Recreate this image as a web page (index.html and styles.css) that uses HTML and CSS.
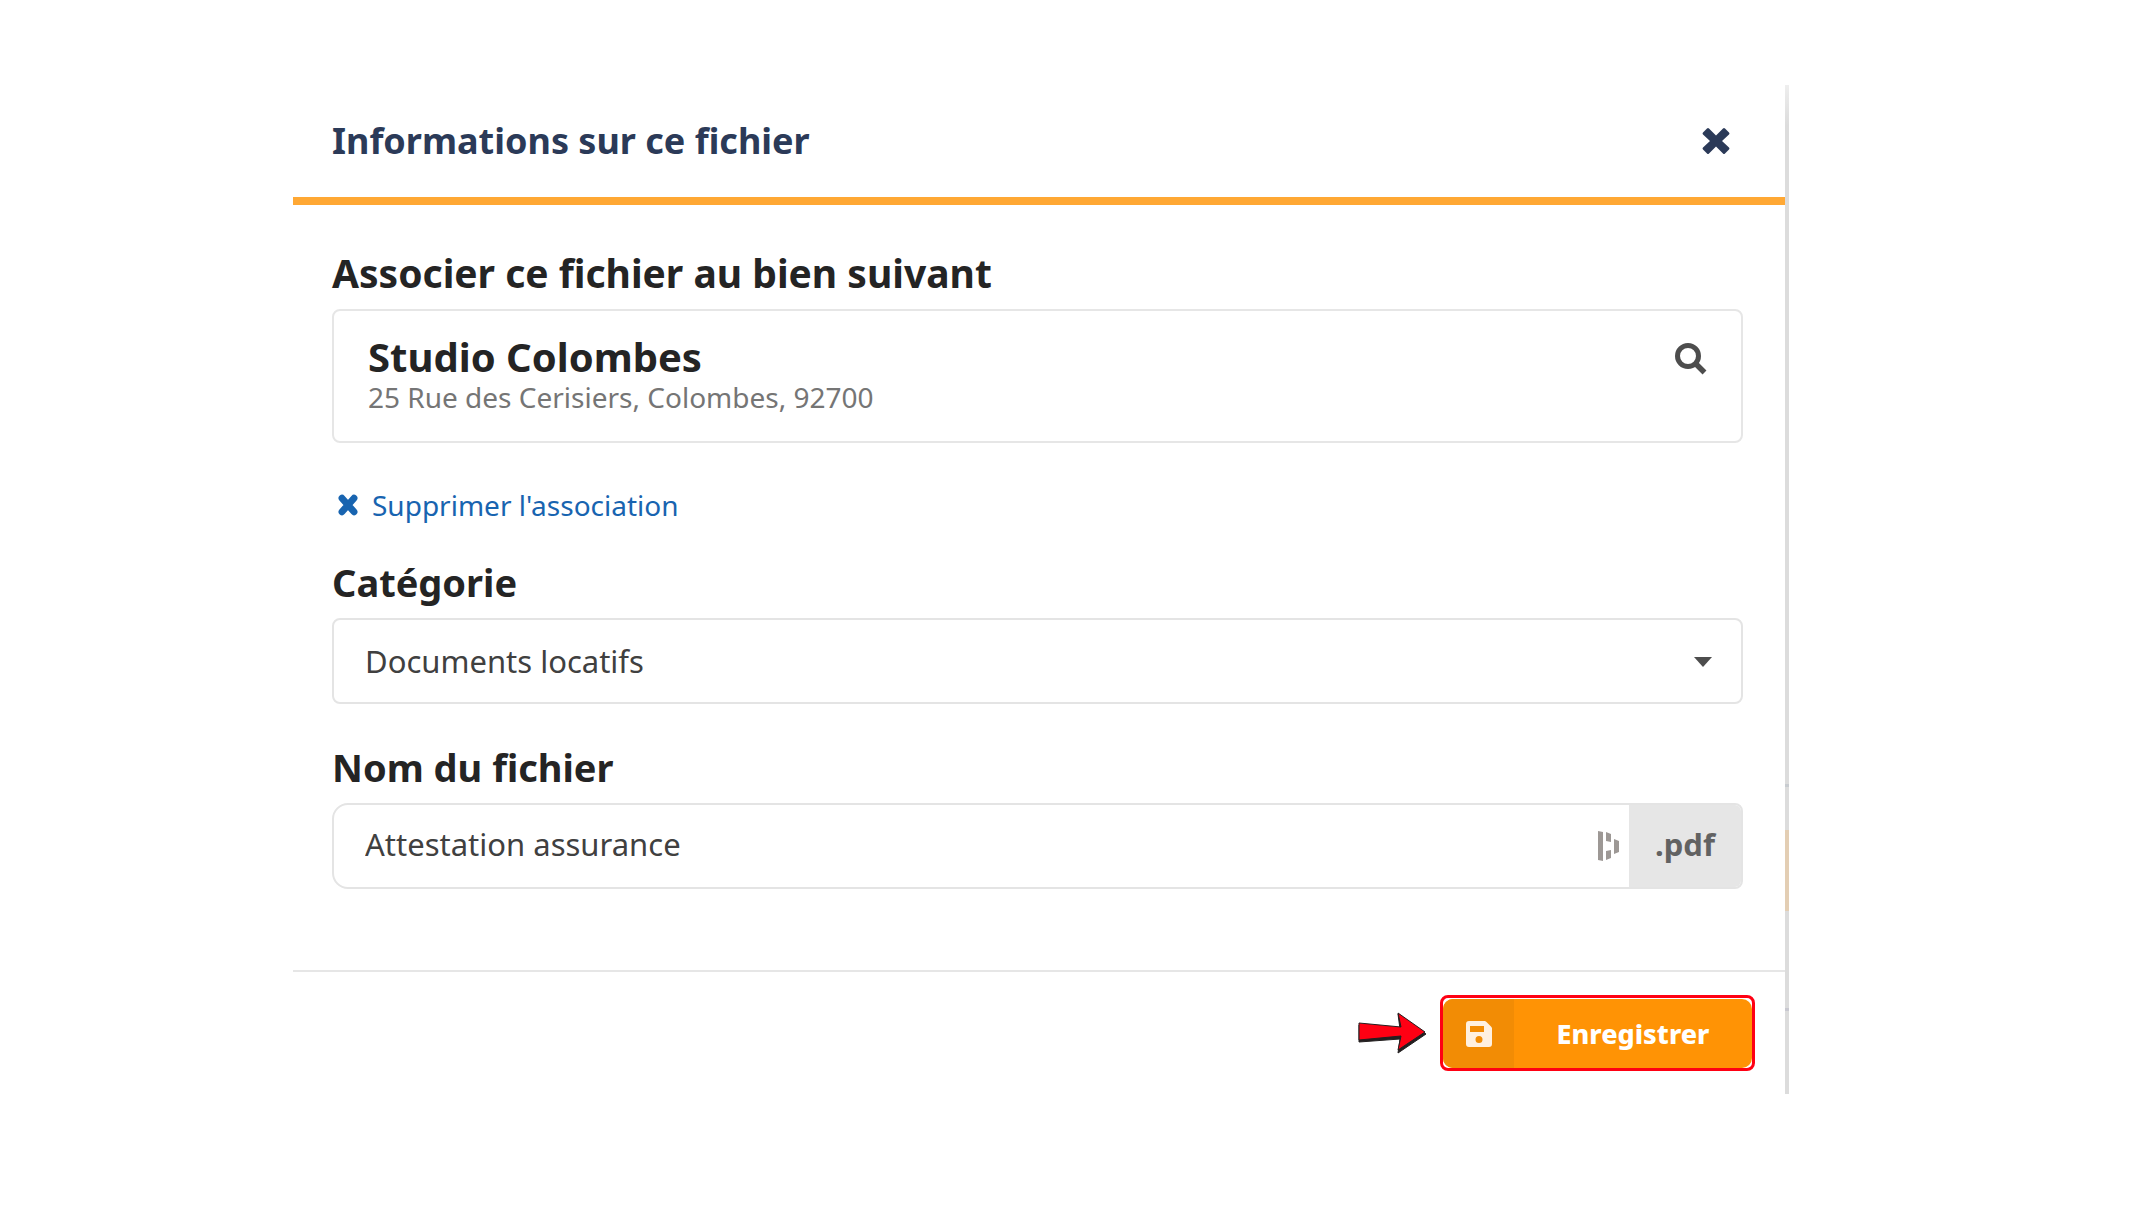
FILE: index.html
```html
<!DOCTYPE html>
<html lang="fr">
<head>
    <meta charset="UTF-8">
    <meta name="viewport" content="width=device-width, initial-scale=1.0">
    <title>Informations sur ce fichier</title>
    <link rel="stylesheet" href="styles.css">
</head>
<body>
    <form class="modal">
        <header class="modal-header">
            <h1>Informations sur ce fichier</h1>
            <button type="button" class="close" aria-label="Fermer">
                <svg width="28" height="28" viewBox="0 0 28 28"><path d="M5 1.500Q6 .5 7 1.500L14 8.500 21 1.500Q22 .5 23 1.500L27 5.500Q28 6.500 27 7.500L20 14 27 20.500Q28 21.500 27 22.500L23 26.500Q22 27.500 21 26.500L14 19.500 7 26.500Q6 27.500 5 26.500L1 22.500Q0 21.500 1 20.500L8 14 1 7.500Q0 6.500 1 5.500Z" fill="currentColor"/></svg>
            </button>
        </header>

        <div class="modal-body">
            <!-- Bien associé -->
            <h2>Associer ce fichier au bien suivant</h2>
            <div class="property">
                <div>
                    <strong>Studio Colombes</strong>
                    <p>25 Rue des Cerisiers, Colombes, 92700</p>
                </div>
                <button type="button" class="search" aria-label="Rechercher">
                    <svg width="32" height="32" viewBox="0 0 32 32" fill="none" stroke="currentColor"><circle cx="13" cy="13" r="10.5" stroke-width="5"/><path d="M21 21 29.500 29.500" stroke-width="5.500"/></svg>
                </button>
            </div>
            <a href="#" class="remove">
                <svg width="24" height="24" viewBox="0 0 28 28"><path d="M7 6 21 22M21 6 7 22" stroke="currentColor" stroke-width="8" stroke-linecap="round"/></svg>
                Supprimer l'association
            </a>

            <!-- Catégorie -->
            <label for="categorie">Catégorie</label>
            <div class="select">
                <select id="categorie">
                    <option>Documents locatifs</option>
                </select>
                <svg class="caret" width="18" height="10" viewBox="0 0 18 10"><path d="M0 0H18L9 10Z" fill="currentColor"/></svg>
            </div>

            <!-- Nom du fichier -->
            <label for="nom">Nom du fichier</label>
            <div class="filename">
                <input type="text" id="nom" value="Attestation assurance">
                <svg class="autofill" width="22" height="30" viewBox="0 0 22 30" fill="currentColor"><path d="M0 0 5 1V30L0 29ZM8 1 13 3V11L8 10ZM8 20 13 19V27L8 29ZM16 8 21 10V21L16 23Z"/></svg>
                <span class="extension">.pdf</span>
            </div>
        </div>

        <footer class="modal-footer">
            <svg class="arrow" width="70" height="44" viewBox="0 0 70 44"><path d="M1 14 42 18 40 3 68 23 40 42 42 28 1 31Z" fill="#231f20" stroke="#231f20" stroke-width="1"/><path d="M1 12 43 16 40 2 67 21 40 39 43 25 1 29Z" fill="#ff0013" stroke="#231f20" stroke-width="1"/></svg>
            <div class="highlight">
                <button type="submit" class="save">
                    <span class="save-icon">
                        <svg width="26" height="26" viewBox="0 0 26 26"><path fill="currentColor" fill-rule="evenodd" d="M3 0H18.500Q19.500 0 20.500 1L25 5.500Q26 6.500 26 7.500V23Q26 26 23 26H3Q0 26 0 23V3Q0 0 3 0ZM4 5V11H18V5ZM13 15A3.500 3.500 0 1 0 13 22A3.500 3.500 0 1 0 13 15Z"/></svg>
                    </span>
                    <span class="save-text">Enregistrer</span>
                </button>
            </div>
        </footer>
    </form>
</body>
</html>
```
FILE: styles.css
```css
* {
    box-sizing: border-box;
}
body {
    margin: 0;
    font-family: "Noto Sans", sans-serif;
    background-color: #fff;
    color: #242424;
}
button, input, select {
    font-family: inherit;
}
button {
    padding: 0;
    border: none;
    background: none;
    cursor: pointer;
}
svg {
    display: block;
}
.modal {
    margin: 85px 347px 40px 293px;
    padding-right: 4px;
    /* Bord droit de la fenêtre */
    background: linear-gradient(#eee 0, #dcdcdc 40px, #dcdcdc 699px, #c8ccd0 699px, #c8ccd0 702px, #dcdcdc 702px, #dcdcdc 745px, #e3ceb4 745px, #e3ceb4 826px, #dcdcdc 826px, #dcdcdc 923px, #c8c8d0 923px, #c8c8d0 926px, #dcdcdc 926px) right / 4px 100% no-repeat;
}
.modal-header {
    display: flex;
    align-items: center;
    justify-content: space-between;
    height: 120px;
    padding: 0 55px 0 39px;
    border-bottom: 8px solid #ffa834;
    color: #2b3a58;
}
h1 {
    margin: 0;
    font-size: 36px;
    line-height: 40px;
}
.close {
    color: #2b3a58;
}
.modal-body {
    padding: 47px 42px 81px 39px;
}
h2, label {
    display: block;
    margin: 0 0 16px;
    font-weight: bold;
    line-height: 40px;
}
h2 {
    font-size: 39px;
}
label {
    font-size: 38px;
}
.property {
    display: flex;
    align-items: flex-start;
    justify-content: space-between;
    height: 134px;
    padding: 26px 34px;
    border: 2px solid #e6e6e6;
    border-radius: 8px;
}
.property strong {
    display: block;
    font-size: 40px;
    line-height: 40px;
}
.property p {
    margin: 0;
    font-size: 28px;
    line-height: 40px;
    color: #757575;
}
.search {
    padding-top: 6px;
    color: #4d4d4d;
}
.remove {
    display: flex;
    align-items: center;
    gap: 12px;
    width: fit-content;
    margin: 42px 0 37px;
    padding-left: 4px;
    font-size: 28px;
    line-height: 40px;
    color: #1864b0;
    text-decoration: none;
}
.modal-body h2 {
    padding-top: 1px;
}
.select {
    position: relative;
    margin-bottom: 43px;
}
.select select, .filename {
    width: 100%;
    height: 86px;
    border: 2px solid #e4e4e4;
    border-radius: 8px;
    background-color: #fff;
}
.select select, .filename input {
    padding: 0 31px;
    font-size: 31px;
    color: #404040;
    appearance: none;
}
.caret {
    position: absolute;
    top: 39px;
    right: 31px;
    color: #4d4d4d;
}
.filename {
    display: flex;
    align-items: center;
    border-radius: 16px 8px 8px 16px;
    overflow: hidden;
}
.filename input {
    flex: 1;
    min-width: 0;
    height: 100%;
    padding-bottom: 4px;
    border: none;
    background: none;
    outline: none;
}
.autofill {
    margin-right: 9px;
    color: #9d9895;
}
.extension {
    display: flex;
    align-items: center;
    justify-content: center;
    width: 112px;
    height: 100%;
    padding-bottom: 4px;
    background-color: #e6e6e6;
    font-size: 31px;
    font-weight: bold;
    color: #626262;
}
.modal-footer {
    display: flex;
    align-items: center;
    justify-content: flex-end;
    gap: 12px;
    height: 124px;
    padding: 0 30px 0 39px;
    border-top: 2px solid #e6e6e6;
}
/* Cadre rouge autour du bouton */
.highlight {
    padding: 1px 0 0;
    border: 3px solid #ff0013;
    border-radius: 8px;
}
.save {
    display: flex;
    width: 309px;
    height: 69px;
    border-radius: 10px;
    overflow: hidden;
    background-color: #ff9305;
    color: #fff;
    font-size: 27px;
    font-weight: 800;
}
.save-icon {
    display: flex;
    align-items: center;
    justify-content: center;
    width: 71px;
    height: 100%;
    background-color: #f28c05;
    color: #fff0e0;
}
.save-text {
    flex: 1;
    align-self: center;
}
```
